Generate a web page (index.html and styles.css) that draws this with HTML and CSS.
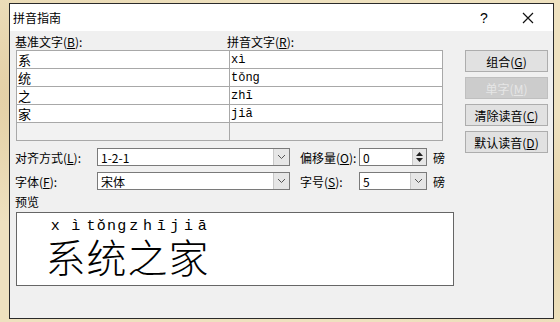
FILE: index.html
```html
<!DOCTYPE html>
<html lang="zh-CN">
<head>
    <meta charset="UTF-8">
    <title>拼音指南</title>
    <link rel="stylesheet" href="styles.css">
</head>
<body>
    <div class="dialog">
        <div class="titlebar">
            <span class="title">拼音指南</span>
            <span class="help">?</span>
            <span class="close">
                <svg width="12" height="12" viewBox="0 0 12 12">
                    <path d="M1 1 L11 11 M11 1 L1 11" stroke="#111" stroke-width="1.2" fill="none"/>
                </svg>
            </span>
        </div>

        <div class="content">
            <div class="top">
                <div class="list-area">
                    <div class="list-labels">
                        <span class="col-label">基准文字(<u>B</u>):</span>
                        <span class="col-label">拼音文字(<u>R</u>):</span>
                    </div>
                    <table class="pinyin-table">
                        <tr><td class="base">系</td><td class="ruby">xì</td></tr>
                        <tr><td class="base">统</td><td class="ruby">tǒng</td></tr>
                        <tr><td class="base">之</td><td class="ruby">zhī</td></tr>
                        <tr><td class="base">家</td><td class="ruby">jiā</td></tr>
                        <tr class="empty"><td></td><td></td></tr>
                    </table>
                </div>
                <div class="buttons">
                    <button class="btn">组合(<u>G</u>)</button>
                    <button class="btn" disabled>单字(<u>M</u>)</button>
                    <button class="btn">清除读音(<u>C</u>)</button>
                    <button class="btn">默认读音(<u>D</u>)</button>
                </div>
            </div>

            <div class="options">
                <span class="opt-label">对齐方式(<u>L</u>):</span>
                <div class="field">
                    <span class="value">1-2-1</span>
                    <span class="drop">
                        <svg width="9" height="6" viewBox="0 0 9 6"><path d="M1 1 L4.5 4.5 L8 1" stroke="#555" fill="none"/></svg>
                    </span>
                </div>
                <span class="opt-label second">偏移量(<u>O</u>):</span>
                <div class="field">
                    <span class="value">0</span>
                    <span class="spin">
                        <svg width="7" height="4" viewBox="0 0 7 4"><path d="M0 4 L3.5 0 L7 4 Z" fill="#222"/></svg>
                        <svg width="7" height="4" viewBox="0 0 7 4"><path d="M0 0 L3.5 4 L7 0 Z" fill="#222"/></svg>
                    </span>
                </div>
                <span class="unit">磅</span>

                <span class="opt-label">字体(<u>F</u>):</span>
                <div class="field">
                    <span class="value">宋体</span>
                    <span class="drop">
                        <svg width="9" height="6" viewBox="0 0 9 6"><path d="M1 1 L4.5 4.5 L8 1" stroke="#555" fill="none"/></svg>
                    </span>
                </div>
                <span class="opt-label second">字号(<u>S</u>):</span>
                <div class="field">
                    <span class="value">5</span>
                    <span class="drop">
                        <svg width="9" height="6" viewBox="0 0 9 6"><path d="M1 1 L4.5 4.5 L8 1" stroke="#555" fill="none"/></svg>
                    </span>
                </div>
                <span class="unit">磅</span>
            </div>

            <div class="preview-label">预览</div>
            <div class="preview">
                <div class="ruby-group">
                    <div class="pinyin"><span>x</span><span>ì</span></div>
                    <div class="hanzi">系</div>
                </div>
                <div class="ruby-group">
                    <div class="pinyin"><span>t</span><span>ǒ</span><span>n</span><span>g</span></div>
                    <div class="hanzi">统</div>
                </div>
                <div class="ruby-group">
                    <div class="pinyin"><span>z</span><span>h</span><span>ī</span></div>
                    <div class="hanzi">之</div>
                </div>
                <div class="ruby-group">
                    <div class="pinyin"><span>j</span><span>i</span><span>ā</span></div>
                    <div class="hanzi">家</div>
                </div>
            </div>
        </div>
    </div>
</body>
</html>
```

FILE: styles.css
```css
body {
    margin: 0;
    padding: 3px 0 0 9px;
    background-color: #eee1bf;
    background-image:
        radial-gradient(ellipse at 10% 30%, rgba(205, 170, 110, 0.35), transparent 40%),
        radial-gradient(ellipse at 95% 70%, rgba(210, 180, 120, 0.35), transparent 35%);
    height: 322px;
    box-sizing: border-box;
    overflow: hidden;
    font-family: "Noto Sans CJK SC", "Noto Sans", sans-serif;
    font-size: 12px;
    color: #000;
}

.dialog {
    width: 545px;
    height: 316px;
    box-sizing: border-box;
    border: 1px solid #2a2a2a;
    background-color: #f0f0f0;
    display: flex;
    flex-direction: column;
}

.titlebar {
    height: 27px;
    background-color: #ffffff;
    display: flex;
    align-items: center;
    padding-left: 3px;
}

.title {
    flex: 1;
    font-size: 12px;
}

.help {
    font-family: "Liberation Sans", sans-serif;
    font-size: 14px;
    width: 12px;
    margin-right: 30px;
}

.close {
    display: flex;
    margin-right: 19px;
}

.content {
    padding: 3px 6px 0 5px;
}

/* the buttons run past the table, so the row keeps the table's height */
.top {
    display: flex;
    align-items: flex-start;
    height: 106px;
}

.list-area {
    width: 423px;
    padding-left: 1px;
}

.list-labels {
    display: flex;
    height: 16px;
    line-height: 16px;
}

.col-label {
    width: 211px;
}

.col-label:first-child {
    margin-left: -1px;
    width: 212px;
}

.pinyin-table {
    border-collapse: collapse;
    width: 422px;
    table-layout: fixed;
    border: 1px solid #9c9c9c;
}

.pinyin-table td {
    width: 211px;
    height: 17px;
    padding: 0 0 0 1px;
    border: 1px solid #a8a8a8;
    background-color: #ffffff;
    line-height: 16px;
}

.pinyin-table .base {
    font-size: 13px;
}

.pinyin-table .ruby {
    font-family: "Liberation Mono", monospace;
    font-size: 12px;
}

.pinyin-table .empty td {
    background-color: #f2f2f2;
}

.buttons {
    margin-left: 26px;
    padding-top: 16px;
    display: flex;
    flex-direction: column;
    gap: 5px;
}

.btn {
    width: 83px;
    height: 22px;
    padding: 0;
    border: 1px solid #adadad;
    background-color: #e1e1e1;
    font-family: "Noto Sans CJK SC", sans-serif;
    font-size: 12px;
    color: #000;
}

.btn:disabled {
    background-color: #cccccc;
    border-color: #bfbfbf;
    color: #e6e6e6;
}

.options {
    display: grid;
    grid-template-columns: 82px 193px 69px 68px auto;
    grid-auto-rows: 18px;
    row-gap: 6px;
    margin-top: 8px;
    align-items: center;
}

.opt-label.second {
    padding-left: 10px;
}

.field {
    height: 18px;
    box-sizing: border-box;
    border: 1px solid #7a7a7a;
    background-color: #ffffff;
    display: flex;
    align-items: center;
}

.value {
    flex: 1;
    padding-left: 3px;
    font-size: 12px;
}

.drop {
    width: 15px;
    align-self: stretch;
    background-color: #e6e6e6;
    border-left: 1px solid #c8c8c8;
    display: flex;
    align-items: center;
    justify-content: center;
}

.spin {
    width: 13px;
    align-self: stretch;
    background-color: #e6e6e6;
    border-left: 1px solid #c8c8c8;
    display: flex;
    flex-direction: column;
    align-items: center;
    justify-content: center;
    gap: 2px;
}

.spin svg {
    display: block;
}

.unit {
    padding-left: 6px;
}

.preview-label {
    margin-top: 5px;
    height: 17px;
    line-height: 14px;
}

.preview {
    margin-left: 1px;
    width: 438px;
    height: 74px;
    box-sizing: border-box;
    border: 1px solid #666666;
    background-color: #ffffff;
    display: flex;
    align-items: flex-start;
    padding: 6px 0 0 28px;
}

.ruby-group {
    width: 41px;
    display: flex;
    flex-direction: column;
}

.pinyin {
    display: flex;
    justify-content: space-around;
    font-family: "Liberation Mono", monospace;
    font-size: 15px;
    line-height: 16px;
    height: 16px;
}

.hanzi {
    font-size: 40px;
    font-weight: 300;
    line-height: 42px;
    height: 42px;
    text-align: center;
}
```
